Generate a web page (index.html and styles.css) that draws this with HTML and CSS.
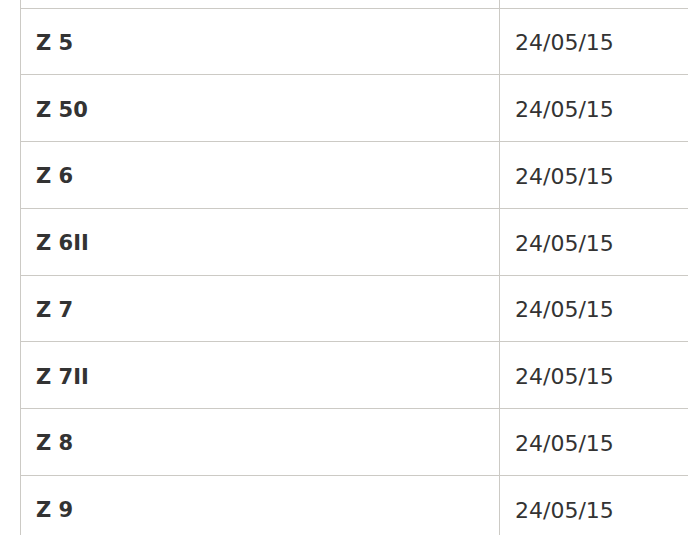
FILE: index.html
```html
<!DOCTYPE html>
<html lang="en">
<head>
<meta charset="utf-8">
<title>Table</title>
<link rel="stylesheet" href="styles.css">
</head>
<body>
<div class="wrap">
<table class="list">
<tbody>
<tr class="partial"><td class="name"></td><td class="date"></td></tr>
<tr><td class="name">Z 5</td><td class="date">24/05/15</td></tr>
<tr><td class="name">Z 50</td><td class="date">24/05/15</td></tr>
<tr><td class="name">Z 6</td><td class="date">24/05/15</td></tr>
<tr><td class="name">Z 6II</td><td class="date">24/05/15</td></tr>
<tr><td class="name">Z 7</td><td class="date">24/05/15</td></tr>
<tr><td class="name">Z 7II</td><td class="date">24/05/15</td></tr>
<tr><td class="name">Z 8</td><td class="date">24/05/15</td></tr>
<tr><td class="name">Z 9</td><td class="date">24/05/15</td></tr>
</tbody>
</table>
</div>
</body>
</html>
```
FILE: styles.css
```css
html, body {
  margin: 0;
  padding: 0;
  background: #fff;
  overflow: hidden;
}
.wrap {
  padding-left: 20px;
}
.list {
  border-collapse: collapse;
  width: 800px;
  font-family: "DejaVu Sans", Verdana, sans-serif;
  font-size: 22px;
  color: #333;
}
.list td {
  border: 1px solid #cccac5;
  border-top: 0;
  height: 66.75px;
  padding: 3px 15px 0;
  vertical-align: middle;
  box-sizing: border-box;
}
.list tr.partial td {
  height: 8px;
  padding: 0;
}
.list td.name {
  width: 479px;
  font-weight: bold;
  font-size: 21px;
}
.list td.date {
  border-right: 0;
}
```
